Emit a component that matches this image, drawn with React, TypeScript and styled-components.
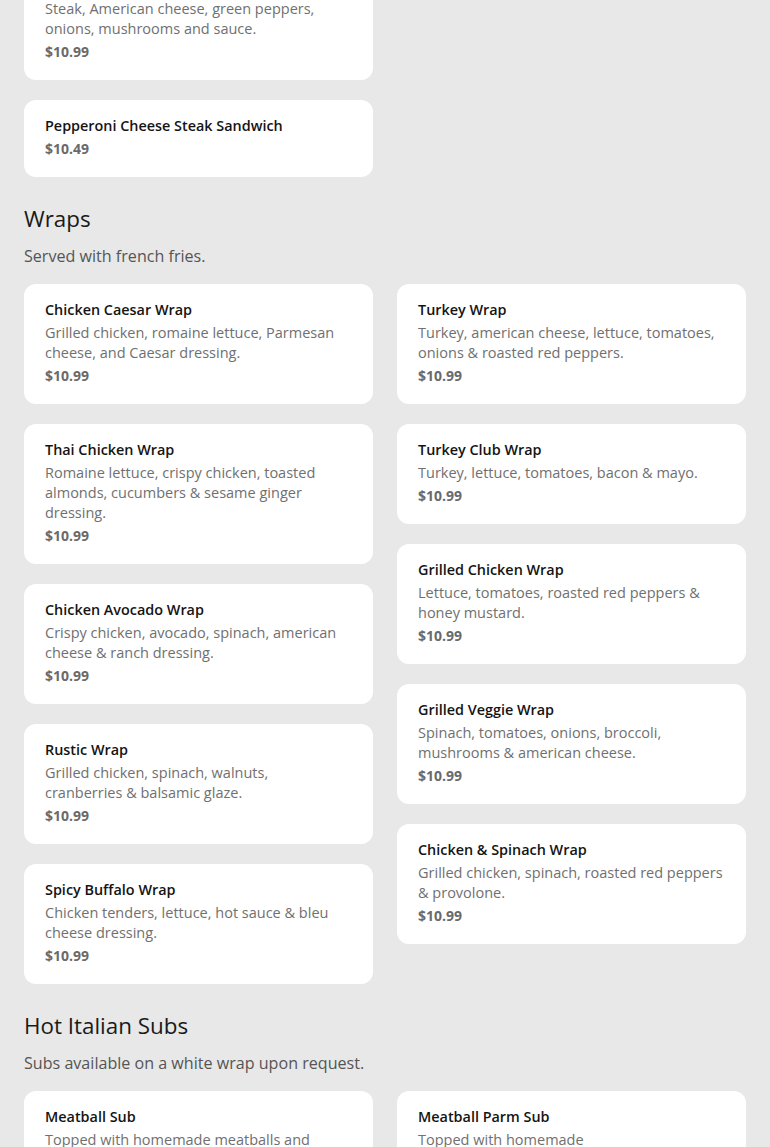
import React from "react";
import styled, { createGlobalStyle } from "styled-components";

const Global = createGlobalStyle`
  html, body { margin: 0; padding: 0; background: #e8e8e8; }
  body { font-family: "Open Sans", "Noto Sans", sans-serif; overflow: hidden; }
`;

const Page = styled.div`
  padding: 0 24px;
  height: 1147px;
  overflow: hidden;
`;

const Section = styled.section<{ $offset?: number }>`
  margin-top: ${(p) => (p.$offset !== undefined ? `${p.$offset}px` : "26px")};
`;

const Heading = styled.h2`
  margin: 0;
  font-size: 22.4px;
  line-height: 32px;
  font-weight: 400;
  color: #1a1a1a;
`;

const Subtitle = styled.p`
  margin: 9px 0 16px;
  font-size: 16.1px;
  line-height: 24px;
  color: #555;
`;

const Grid = styled.div`
  display: grid;
  grid-template-columns: 1fr 1fr;
  column-gap: 24px;
  align-items: start;
`;

const Column = styled.div`
  display: flex;
  flex-direction: column;
  gap: 20px;
`;

const Card = styled.div`
  background: #fff;
  border-radius: 12px;
  padding: 16px 20px 18px 21px;
`;

const Title = styled.div`
  font-size: 14.4px;
  line-height: 20px;
  font-weight: 600;
  color: #141414;
`;

const Desc = styled.div`
  margin-top: 3px;
  font-size: 14.5px;
  line-height: 20px;
  color: #707070;
`;

const Price = styled.div`
  margin-top: 3px;
  font-size: 14px;
  line-height: 20px;
  font-weight: 700;
  color: #6a6a6a;
`;

type Item = { name: string; desc?: string; price: string };

const ItemCard = ({ item }: { item: Item }) => (
  <Card>
    <Title>{item.name}</Title>
    {item.desc && <Desc>{item.desc}</Desc>}
    <Price>{item.price}</Price>
  </Card>
);

const steakLeft: Item[] = [
  {
    name: "Cheese Steak Sandwich",
    desc: "Steak, American cheese, green peppers, onions, mushrooms and sauce.",
    price: "$10.99",
  },
  { name: "Pepperoni Cheese Steak Sandwich", price: "$10.49" },
];

const wrapsLeft: Item[] = [
  { name: "Chicken Caesar Wrap", desc: "Grilled chicken, romaine lettuce, Parmesan cheese, and Caesar dressing.", price: "$10.99" },
  { name: "Thai Chicken Wrap", desc: "Romaine lettuce, crispy chicken, toasted almonds, cucumbers & sesame ginger dressing.", price: "$10.99" },
  { name: "Chicken Avocado Wrap", desc: "Crispy chicken, avocado, spinach, american cheese & ranch dressing.", price: "$10.99" },
  { name: "Rustic Wrap", desc: "Grilled chicken, spinach, walnuts, cranberries\u00a0& balsamic glaze.", price: "$10.99" },
  { name: "Spicy Buffalo Wrap", desc: "Chicken tenders, lettuce, hot sauce & bleu cheese dressing.", price: "$10.99" },
];

const wrapsRight: Item[] = [
  { name: "Turkey Wrap", desc: "Turkey, american cheese, lettuce, tomatoes, onions & roasted red peppers.", price: "$10.99" },
  { name: "Turkey Club Wrap", desc: "Turkey, lettuce, tomatoes, bacon & mayo.", price: "$10.99" },
  { name: "Grilled Chicken Wrap", desc: "Lettuce, tomatoes, roasted red peppers & honey mustard.", price: "$10.99" },
  { name: "Grilled Veggie Wrap", desc: "Spinach, tomatoes, onions, broccoli, mushrooms & american cheese.", price: "$10.99" },
  { name: "Chicken & Spinach Wrap", desc: "Grilled chicken, spinach, roasted red peppers & provolone.", price: "$10.99" },
];

const subsLeft: Item[] = [
  { name: "Meatball Sub", desc: "Topped with homemade meatballs and marinara sauce.", price: "$10.99" },
];
const subsRight: Item[] = [
  { name: "Meatball Parm Sub", desc: "Topped with homemade meatballs,marinara,mozzarella cheese.", price: "$11.49" },
];

const Columns = ({ left, right }: { left: Item[]; right: Item[] }) => (
  <Grid>
    <Column>
      {left.map((it) => (
        <ItemCard key={it.name} item={it} />
      ))}
    </Column>
    <Column>
      {right.map((it) => (
        <ItemCard key={it.name} item={it} />
      ))}
    </Column>
  </Grid>
);

export default function App() {
  return (
    <>
      <Global />
      <Page>
        <Section $offset={-40}>
          <Columns left={steakLeft} right={[]} />
        </Section>
        <Section>
          <Heading>Wraps</Heading>
          <Subtitle>Served with french fries.</Subtitle>
          <Columns left={wrapsLeft} right={wrapsRight} />
        </Section>
        <Section>
          <Heading>Hot Italian Subs</Heading>
          <Subtitle>Subs available on a white wrap upon request.</Subtitle>
          <Columns left={subsLeft} right={subsRight} />
        </Section>
      </Page>
    </>
  );
}
